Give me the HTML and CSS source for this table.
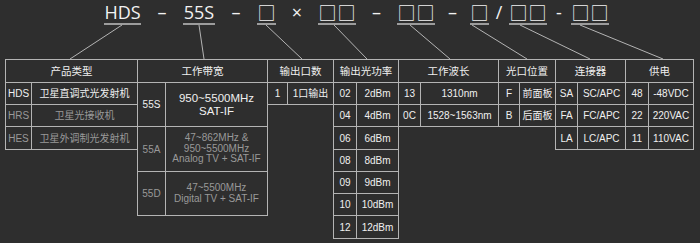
FILE: index.html
```html
<!DOCTYPE html>
<html lang="zh">
<head>
<meta charset="utf-8">
<title>HDS 型号说明</title>
<link rel="stylesheet" href="styles.css">
</head>
<body>
<div class="page">
  <div class="code">
    <span class="tok w37">HDS</span><span class="sep w42">–</span>
    <span class="tok w32">55S</span><span class="sep w42">–</span>
    <span class="tok sqs"><span class="sq">□</span></span><span class="sep w42">×</span>
    <span class="tok sqs"><span class="sq">□</span><span class="sq">□</span></span><span class="sep w41">–</span>
    <span class="tok sqs"><span class="sq">□</span><span class="sq">□</span></span><span class="sep w35">–</span>
    <span class="tok sqs"><span class="sq">□</span></span><span class="sep w20">/</span>
    <span class="tok sqs"><span class="sq">□</span><span class="sq">□</span></span><span class="sep w24">-</span>
    <span class="tok sqs"><span class="sq">□</span><span class="sq">□</span></span>
  </div>
  <svg class="links" width="700" height="60" viewBox="0 0 700 60">
    <g stroke="#b4b4b4" stroke-width="1" fill="none">
      <line x1="122" y1="25" x2="70" y2="59"/>
      <line x1="199" y1="25" x2="204" y2="59"/>
      <line x1="266" y1="25" x2="302" y2="59"/>
      <line x1="334" y1="25" x2="367" y2="59"/>
      <line x1="410" y1="25" x2="450" y2="59"/>
      <line x1="472" y1="25" x2="527" y2="59"/>
      <line x1="520" y1="25" x2="590" y2="59"/>
      <line x1="580" y1="25" x2="663" y2="59"/>
    </g>
  </svg>
  <div class="table">
    <div class="grp g1">
      <div class="c h">产品类型</div>
      <div class="c">HDS</div><div class="c">卫星直调式光发射机</div>
      <div class="c dim">HRS</div><div class="c dim">卫星光接收机</div>
      <div class="c dim">HES</div><div class="c dim">卫星外调制光发射机</div>
    </div>
    <div class="grp g2">
      <div class="c h">工作带宽</div>
      <div class="c r2">55S</div><div class="c r2 big">950~5500MHz<br>SAT-IF</div>
      <div class="c r2 dim">55A</div><div class="c r2 dim small">47~862MHz &amp;<br>950~5500MHz<br>Analog TV + SAT-IF</div>
      <div class="c r2 dim">55D</div><div class="c r2 dim small">47~5500MHz<br>Digital TV + SAT-IF</div>
    </div>
    <div class="grp g3">
      <div class="c h">输出口数</div>
      <div class="c">1</div><div class="c">1口输出</div>
    </div>
    <div class="grp g4">
      <div class="c h">输出光功率</div>
      <div class="c">02</div><div class="c">2dBm</div>
      <div class="c">04</div><div class="c">4dBm</div>
      <div class="c">06</div><div class="c">6dBm</div>
      <div class="c">08</div><div class="c">8dBm</div>
      <div class="c">09</div><div class="c">9dBm</div>
      <div class="c">10</div><div class="c">10dBm</div>
      <div class="c">12</div><div class="c">12dBm</div>
    </div>
    <div class="grp g5">
      <div class="c h">工作波长</div>
      <div class="c">13</div><div class="c">1310nm</div>
      <div class="c">0C</div><div class="c">1528~1563nm</div>
    </div>
    <div class="grp g6">
      <div class="c h">光口位置</div>
      <div class="c">F</div><div class="c">前面板</div>
      <div class="c">B</div><div class="c">后面板</div>
    </div>
    <div class="grp g7">
      <div class="c h">连接器</div>
      <div class="c">SA</div><div class="c">SC/APC</div>
      <div class="c">FA</div><div class="c">FC/APC</div>
      <div class="c">LA</div><div class="c">LC/APC</div>
    </div>
    <div class="grp g8">
      <div class="c h">供电</div>
      <div class="c">48</div><div class="c">-48VDC</div>
      <div class="c">22</div><div class="c">220VAC</div>
      <div class="c">11</div><div class="c">110VAC</div>
    </div>
  </div>
</div>
</body>
</html>
```
FILE: styles.css
```css
html, body {
  margin: 0;
  padding: 0;
  background: #2e2e2e;
}
.page {
  position: relative;
  width: 700px;
  height: 243px;
  overflow: hidden;
}
.code {
  height: 58px;
  padding: 1px 0 0 104px;
  display: flex;
  align-items: flex-start;
  font-family: "Open Sans", "Noto Sans", sans-serif;
  font-size: 18px;
  line-height: 22px;
  color: #f2f2f2;
  white-space: nowrap;
}
.tok {
  display: inline-flex;
  justify-content: center;
  border-bottom: 2px solid #9c9c9c;
}
.sep {
  display: inline-block;
  text-align: center;
}
.w37 { width: 37px; }
.w32 { width: 32px; }
.w42 { width: 42px; }
.w41 { width: 41px; }
.w35 { width: 35px; }
.w24 { width: 24px; }
.w20 { width: 20px; }
.sqs { padding: 0; }
.sq {
  display: inline-block;
  padding: 0 0.5px;
  font-family: "Noto Sans CJK SC", sans-serif;
  font-size: 18px;
  line-height: 22px;
}
.links {
  position: absolute;
  left: 0;
  top: 0;
  pointer-events: none;
}
.table {
  display: flex;
  align-items: flex-start;
  margin-left: 5px;
  font-family: "Liberation Sans", "Noto Sans CJK SC", sans-serif;
  font-size: 10px;
  color: #f0f0f0;
}
.grp {
  display: grid;
  grid-template-rows: 23px 22px 22px 23px 22px 22px 22px 23px;
  align-content: start;
}
.g1 { grid-template-columns: 26px 106px; }
.g2 { grid-template-columns: 28px 102px; }
.g3 { grid-template-columns: 20px 46px; }
.g4 { grid-template-columns: 23px 42px; }
.g5 { grid-template-columns: 22px 78px; }
.g6 { grid-template-columns: 21px 36px; }
.g7 { grid-template-columns: 22px 48px; }
.g8 { grid-template-columns: 23px 45px; }
.c {
  border: 1px solid #b4b4b4;
  margin: 0 -1px -1px 0;
  display: flex;
  align-items: center;
  justify-content: center;
  text-align: center;
  line-height: 11px;
  white-space: nowrap;
}
.h {
  grid-column: span 2;
  font-size: 10.5px;
}
.r2 { grid-row: span 2; }
.dim { color: #999999; }
.big {
  font-size: 11.5px;
  line-height: 12.5px;
}
.small {
  font-size: 10px;
  line-height: 10.5px;
}
```
